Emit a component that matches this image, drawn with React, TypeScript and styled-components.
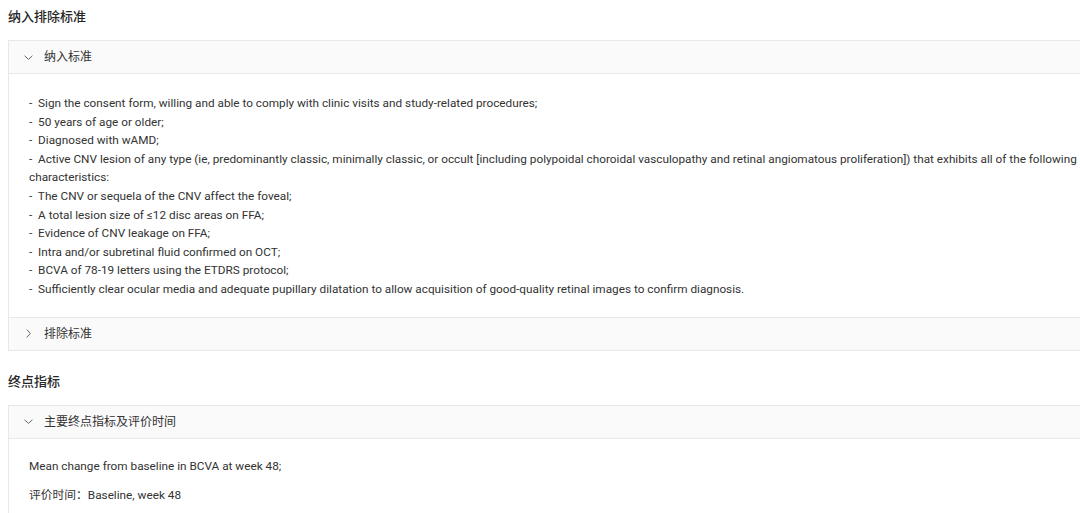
import React from "react";
import styled, { createGlobalStyle } from "styled-components";

const GlobalStyle = createGlobalStyle`
  html, body {
    margin: 0;
    padding: 0;
    background: #ffffff;
    overflow: hidden;
  }
  body {
    font-family: Roboto, "Noto Sans CJK SC", sans-serif;
    color: #333333;
  }
`;

const Page = styled.div`
  width: 1080px;
  overflow: hidden;
  padding: 0 0 0 8px;
  box-sizing: border-box;
`;

const Section = styled.section`
  display: flex;
  flex-direction: column;
  & + & {
    margin-top: 21px;
  }
`;

const SectionTitle = styled.h2`
  margin: 7px 0 13px 0;
  font-size: 13px;
  line-height: 20px;
  font-weight: 500;
  color: #262626;
  ${Section} + ${Section} & {
    margin-top: 0;
  }
`;

const Collapse = styled.div`
  width: 1100px;
  border: 1px solid #e8e8e8;
  border-bottom: 0;
  background: #fafafa;
`;

const Item = styled.div`
  border-bottom: 1px solid #e8e8e8;
`;

const Header = styled.div`
  height: 32px;
  display: flex;
  align-items: center;
  padding-left: 15px;
  gap: 11px;
  font-size: 12px;
  font-weight: 400;
  color: #333333;
  background: #fafafa;
  line-height: 14px;
`;

const Arrow = styled.span`
  width: 9px;
  height: 9px;
  display: inline-flex;
  align-items: center;
  justify-content: center;
`;

const Body = styled.div<{ $padTop: number }>`
  border-top: 1px solid #e8e8e8;
  background: #ffffff;
  padding: ${(p) => p.$padTop}px 29px 18px 20px;
  font-size: 11.78px;
  color: #333333;
`;

const List = styled.div`
  line-height: 18.6px;
`;

const Line = styled.div`
  white-space: pre-wrap;
`;

const Para = styled.p`
  margin: 0;
  line-height: 18px;
  & + & {
    margin-top: 11px;
  }
`;

const ChevronDown = () => (
  <Arrow>
    <svg width="9" height="9" viewBox="0 0 9 9">
      <polyline points="0.6,2.8 4.5,6.4 8.4,2.8" fill="none" stroke="#666" strokeWidth="1" />
    </svg>
  </Arrow>
);

const ChevronRight = () => (
  <Arrow>
    <svg width="9" height="9" viewBox="0 0 9 9">
      <polyline points="2.8,0.6 6.4,4.5 2.8,8.4" fill="none" stroke="#666" strokeWidth="1" />
    </svg>
  </Arrow>
);

const inclusion = [
  "Sign the consent form, willing and able to comply with clinic visits and study-related procedures;",
  "50 years of age or older;",
  "Diagnosed with wAMD;",
  "Active CNV lesion of any type (ie, predominantly classic, minimally classic, or occult [including polypoidal choroidal vasculopathy and retinal angiomatous proliferation]) that exhibits all of the following characteristics:",
  "The CNV or sequela of the CNV affect the foveal;",
  "A total lesion size of ≤12 disc areas on FFA;",
  "Evidence of CNV leakage on FFA;",
  "Intra and/or subretinal fluid confirmed on OCT;",
  "BCVA of 78-19 letters using the ETDRS protocol;",
  "Sufficiently clear ocular media and adequate pupillary dilatation to allow acquisition of good-quality retinal images to confirm diagnosis.",
];

export default function App() {
  return (
    <Page>
      <GlobalStyle />
      <Section>
        <SectionTitle>纳入排除标准</SectionTitle>
        <Collapse>
          <Item>
            <Header>
              <ChevronDown />
              <span>纳入标准</span>
            </Header>
            <Body $padTop={20}>
              <List>
                {inclusion.map((t) => (
                  <Line key={t}>{"-  " + t}</Line>
                ))}
              </List>
            </Body>
          </Item>
          <Item>
            <Header>
              <ChevronRight />
              <span>排除标准</span>
            </Header>
          </Item>
        </Collapse>
      </Section>
      <Section>
        <SectionTitle>终点指标</SectionTitle>
        <Collapse>
          <Item>
            <Header>
              <ChevronDown />
              <span>主要终点指标及评价时间</span>
            </Header>
            <Body $padTop={18}>
              <Para>Mean change from baseline in BCVA at week 48;</Para>
              <Para>评价时间：Baseline, week 48</Para>
            </Body>
          </Item>
        </Collapse>
      </Section>
    </Page>
  );
}
